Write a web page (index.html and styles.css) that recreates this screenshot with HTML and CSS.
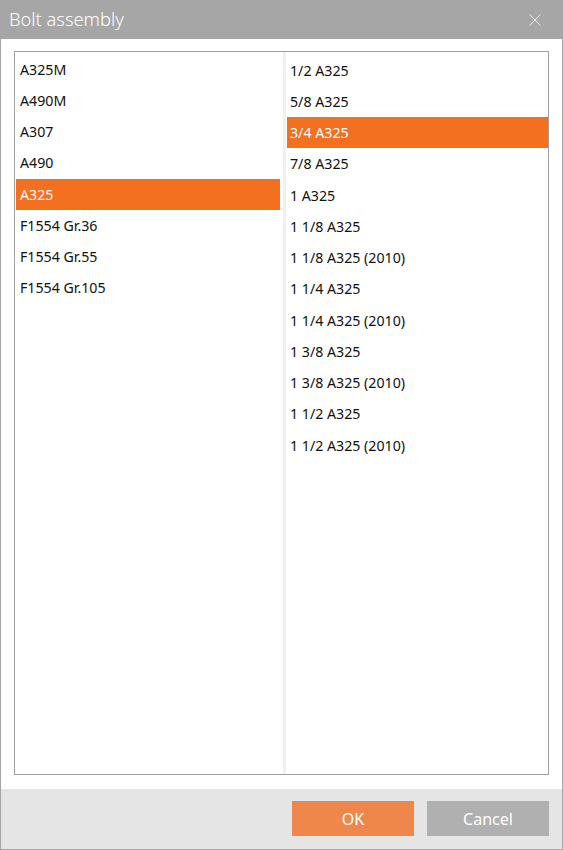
FILE: index.html
```html
<!DOCTYPE html>
<html lang="en">
<head>
  <meta charset="UTF-8">
  <title>Bolt assembly</title>
  <link rel="stylesheet" href="styles.css">
</head>
<body>
  <div class="dialog">
    <div class="titlebar">
      <span class="title">Bolt assembly</span>
      <button class="close" aria-label="Close">
        <svg width="12" height="12" viewBox="0 0 12 12">
          <path d="M0.5 0.5 L11.5 11.5 M11.5 0.5 L0.5 11.5" stroke="#ececec" stroke-width="1" fill="none"/>
        </svg>
      </button>
    </div>

    <div class="content">
      <div class="listbox">
        <ul class="list list-grades">
          <li>A325M</li>
          <li>A490M</li>
          <li>A307</li>
          <li>A490</li>
          <li class="selected">A325</li>
          <li>F1554 Gr.36</li>
          <li>F1554 Gr.55</li>
          <li>F1554 Gr.105</li>
        </ul>
        <div class="divider"></div>
        <ul class="list list-sizes">
          <li>1/2 A325</li>
          <li>5/8 A325</li>
          <li class="selected">3/4 A325</li>
          <li>7/8 A325</li>
          <li>1 A325</li>
          <li>1 1/8 A325</li>
          <li>1 1/8 A325 (2010)</li>
          <li>1 1/4 A325</li>
          <li>1 1/4 A325 (2010)</li>
          <li>1 3/8 A325</li>
          <li>1 3/8 A325 (2010)</li>
          <li>1 1/2 A325</li>
          <li>1 1/2 A325 (2010)</li>
        </ul>
      </div>
    </div>

    <div class="footer">
      <button class="btn btn-ok">OK</button>
      <button class="btn btn-cancel">Cancel</button>
    </div>
  </div>
</body>
</html>
```

FILE: styles.css
```css
:root {
  --frame: #a6a6a6;
  --accent: #f37021;
  --ok: #f0874a;
  --cancel: #b0b0b0;
  --footer: #e5e5e5;
  --text: #111111;
}
* {
  box-sizing: border-box;
  margin: 0;
  padding: 0;
}
body {
  font-family: "Noto Sans", "Open Sans", sans-serif;
  background: #ffffff;
}
.dialog {
  width: 563px;
  height: 850px;
  display: flex;
  flex-direction: column;
  border: 1px solid var(--frame);
  border-top: none;
}
.titlebar {
  height: 39px;
  background: var(--frame);
  display: flex;
  align-items: center;
  justify-content: space-between;
  padding: 0 22px 0 9px;
  margin: 0 -1px;
}
.title {
  color: #ffffff;
  font-size: 18.3px;
  font-weight: 300;
  padding-bottom: 2px;
}
.close {
  background: none;
  border: none;
  width: 12px;
  height: 12px;
  display: flex;
}
.content {
  flex: 1;
  padding: 12px 13px 14px 13px;
  display: flex;
}
.listbox {
  flex: 1;
  display: flex;
  border: 1px solid #a0a0a0;
}
.list {
  list-style: none;
  font-size: 14.2px;
  color: var(--text);
}
.list li {
  height: 31.25px;
  line-height: 31.5px;
  padding-left: 4px;
}
.list li.selected {
  background: var(--accent);
  color: #ffffff;
}
.list-grades {
  width: 268px;
  padding: 1.5px 3px 0 1px;
}
.divider {
  width: 3px;
  background: #f0f0f0;
}
.list-sizes {
  flex: 1;
  padding: 2.5px 0 0 1px;
}
.list-sizes li {
  padding-left: 3px;
}
.footer {
  height: 60px;
  background: var(--footer);
  display: flex;
  justify-content: flex-end;
  gap: 13px;
  padding: 12px 13px 0 0;
}
.btn {
  width: 122px;
  height: 35px;
  border: none;
  color: #ffffff;
  font-family: inherit;
  font-size: 16px;
  cursor: pointer;
}
.btn-ok {
  background: var(--ok);
}
.btn-cancel {
  background: var(--cancel);
}
```
